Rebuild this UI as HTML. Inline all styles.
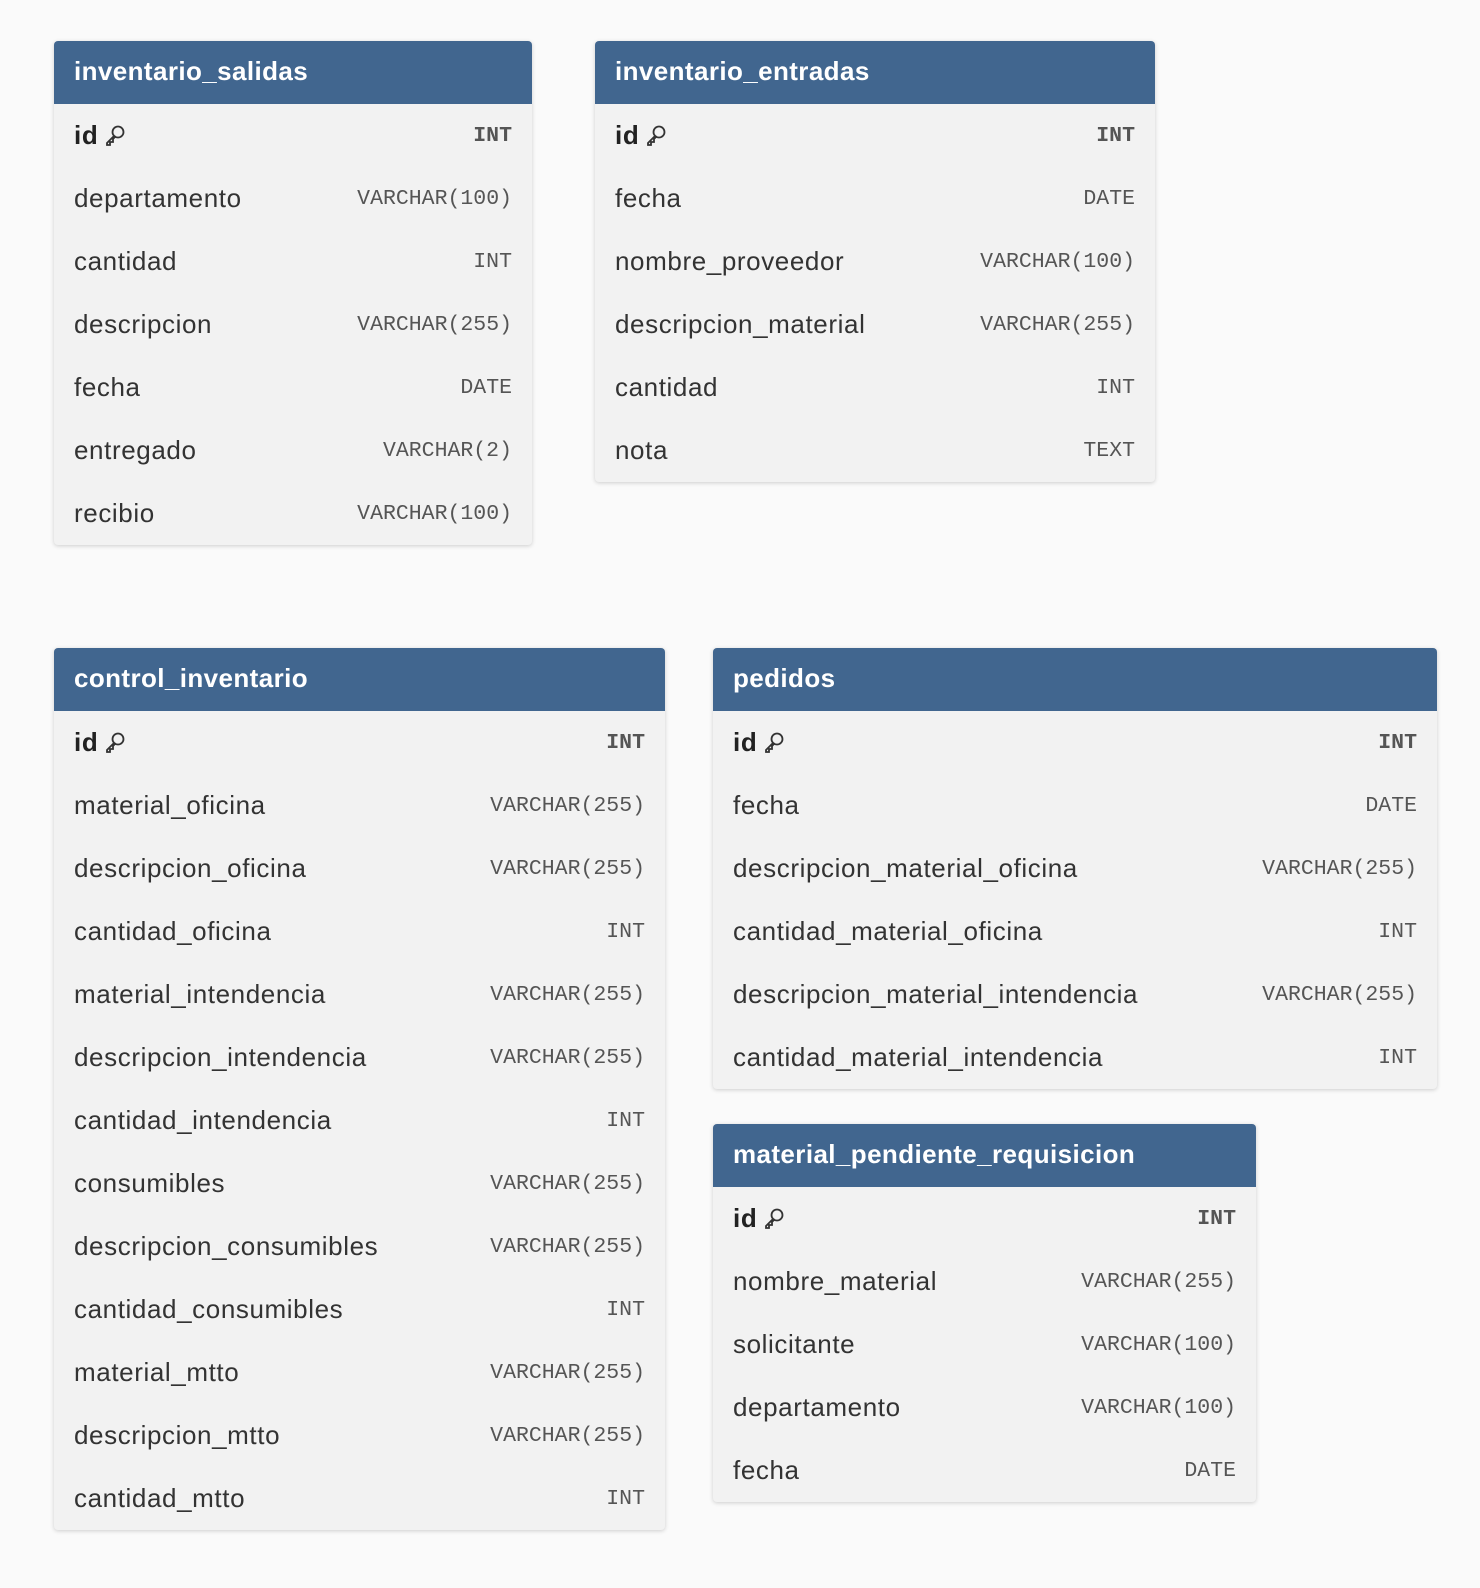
<!DOCTYPE html>
<html><head><meta charset="utf-8"><style>
body{margin:0;background:#fafafa;width:1480px;height:1588px;position:relative;font-family:"Liberation Sans",sans-serif;}
.t{position:absolute;background:#f2f2f2;border-radius:4px;box-shadow:0 1px 4px rgba(0,0,0,0.18);overflow:hidden}
.h{background:#41668f;color:#fff;font-weight:bold;font-size:26px;letter-spacing:0.4px;height:63px;line-height:60px;padding-left:20px}
.r{height:63px;display:flex;justify-content:space-between;align-items:center;padding:0 20px;font-size:26px;letter-spacing:0.6px;color:#333}
.r span:last-child{font-family:"Liberation Mono",monospace;font-size:21.5px;letter-spacing:0;color:#555}
.r.pk span:first-child{font-weight:bold;color:#222}
.r.pk span:last-child{font-weight:bold}
svg{vertical-align:-2px;margin-left:6px}
</style></head><body>
<div class="t" style="left:54px;top:41px;width:478px">
<div class="h">inventario_salidas</div>
<div class="r pk"><span>id<svg width="22" height="22" viewBox="0 0 22 22" fill="none" stroke="#333" stroke-width="1.8"><circle cx="14" cy="8" r="5.5"/><path d="M10 12 L3 19 L3 21 L6 21 L6 18 L9 18 L9 15 L11 13"/></svg></span><span>INT</span></div>
<div class="r"><span>departamento</span><span>VARCHAR(100)</span></div>
<div class="r"><span>cantidad</span><span>INT</span></div>
<div class="r"><span>descripcion</span><span>VARCHAR(255)</span></div>
<div class="r"><span>fecha</span><span>DATE</span></div>
<div class="r"><span>entregado</span><span>VARCHAR(2)</span></div>
<div class="r"><span>recibio</span><span>VARCHAR(100)</span></div>
</div>
<div class="t" style="left:595px;top:41px;width:560px">
<div class="h">inventario_entradas</div>
<div class="r pk"><span>id<svg width="22" height="22" viewBox="0 0 22 22" fill="none" stroke="#333" stroke-width="1.8"><circle cx="14" cy="8" r="5.5"/><path d="M10 12 L3 19 L3 21 L6 21 L6 18 L9 18 L9 15 L11 13"/></svg></span><span>INT</span></div>
<div class="r"><span>fecha</span><span>DATE</span></div>
<div class="r"><span>nombre_proveedor</span><span>VARCHAR(100)</span></div>
<div class="r"><span>descripcion_material</span><span>VARCHAR(255)</span></div>
<div class="r"><span>cantidad</span><span>INT</span></div>
<div class="r"><span>nota</span><span>TEXT</span></div>
</div>
<div class="t" style="left:54px;top:648px;width:611px">
<div class="h">control_inventario</div>
<div class="r pk"><span>id<svg width="22" height="22" viewBox="0 0 22 22" fill="none" stroke="#333" stroke-width="1.8"><circle cx="14" cy="8" r="5.5"/><path d="M10 12 L3 19 L3 21 L6 21 L6 18 L9 18 L9 15 L11 13"/></svg></span><span>INT</span></div>
<div class="r"><span>material_oficina</span><span>VARCHAR(255)</span></div>
<div class="r"><span>descripcion_oficina</span><span>VARCHAR(255)</span></div>
<div class="r"><span>cantidad_oficina</span><span>INT</span></div>
<div class="r"><span>material_intendencia</span><span>VARCHAR(255)</span></div>
<div class="r"><span>descripcion_intendencia</span><span>VARCHAR(255)</span></div>
<div class="r"><span>cantidad_intendencia</span><span>INT</span></div>
<div class="r"><span>consumibles</span><span>VARCHAR(255)</span></div>
<div class="r"><span>descripcion_consumibles</span><span>VARCHAR(255)</span></div>
<div class="r"><span>cantidad_consumibles</span><span>INT</span></div>
<div class="r"><span>material_mtto</span><span>VARCHAR(255)</span></div>
<div class="r"><span>descripcion_mtto</span><span>VARCHAR(255)</span></div>
<div class="r"><span>cantidad_mtto</span><span>INT</span></div>
</div>
<div class="t" style="left:713px;top:648px;width:724px">
<div class="h">pedidos</div>
<div class="r pk"><span>id<svg width="22" height="22" viewBox="0 0 22 22" fill="none" stroke="#333" stroke-width="1.8"><circle cx="14" cy="8" r="5.5"/><path d="M10 12 L3 19 L3 21 L6 21 L6 18 L9 18 L9 15 L11 13"/></svg></span><span>INT</span></div>
<div class="r"><span>fecha</span><span>DATE</span></div>
<div class="r"><span>descripcion_material_oficina</span><span>VARCHAR(255)</span></div>
<div class="r"><span>cantidad_material_oficina</span><span>INT</span></div>
<div class="r"><span>descripcion_material_intendencia</span><span>VARCHAR(255)</span></div>
<div class="r"><span>cantidad_material_intendencia</span><span>INT</span></div>
</div>
<div class="t" style="left:713px;top:1124px;width:543px">
<div class="h">material_pendiente_requisicion</div>
<div class="r pk"><span>id<svg width="22" height="22" viewBox="0 0 22 22" fill="none" stroke="#333" stroke-width="1.8"><circle cx="14" cy="8" r="5.5"/><path d="M10 12 L3 19 L3 21 L6 21 L6 18 L9 18 L9 15 L11 13"/></svg></span><span>INT</span></div>
<div class="r"><span>nombre_material</span><span>VARCHAR(255)</span></div>
<div class="r"><span>solicitante</span><span>VARCHAR(100)</span></div>
<div class="r"><span>departamento</span><span>VARCHAR(100)</span></div>
<div class="r"><span>fecha</span><span>DATE</span></div>
</div>
</body></html>
